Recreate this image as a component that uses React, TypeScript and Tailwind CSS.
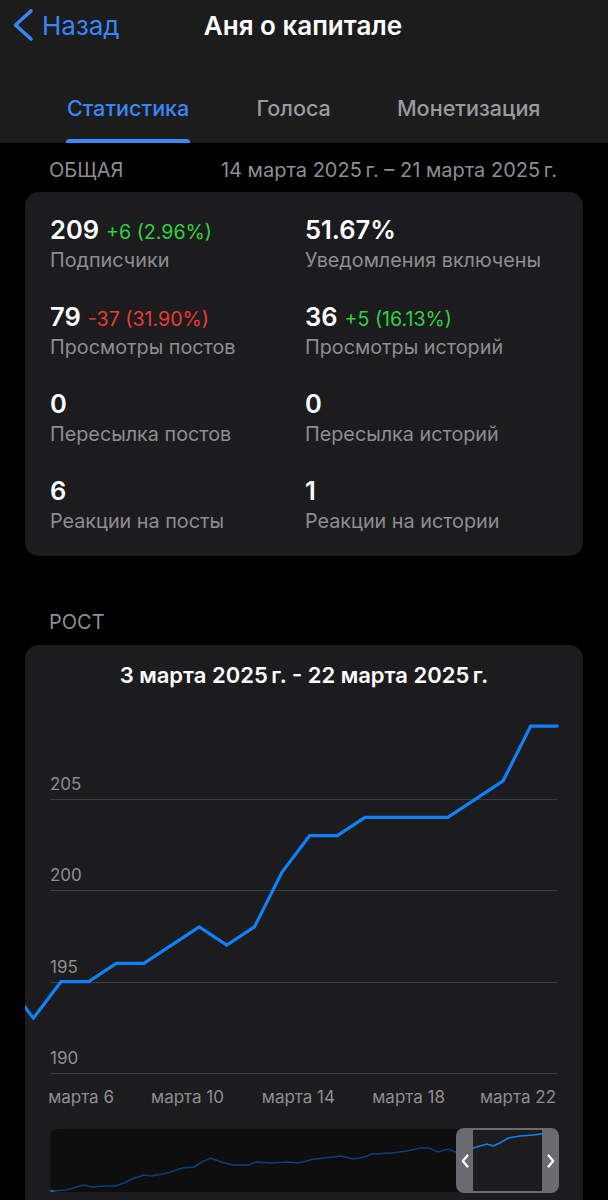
import React from "react";

const FONT = { fontFamily: "Inter, 'Noto Sans', sans-serif" };

const values = [193, 195, 195, 196, 196, 197, 198, 197, 198, 201, 203, 203, 204, 204, 204, 204, 205, 206, 209, 209];

function yOf(v: number) {
  return 386 - (v - 190) * 18.26;
}

const mainPoints: [number, number][] = [
  [-19.2, yOf(195)],
  ...values.map((v, i) => [8.4 + i * 27.63, yOf(v)] as [number, number]),
];

const mainPath = mainPoints.map((p, i) => `${i === 0 ? "M" : "L"}${p[0].toFixed(1)} ${p[1].toFixed(1)}`).join(" ");

const miniPts: [number, number][] = [
  [0.4, 62], [16, 61], [23.7, 59], [33.4, 56], [43, 58], [54.7, 57], [66, 57], [74, 54], [82, 50], [93.5, 46],
  [101, 47], [113, 45], [120.6, 43], [132, 39], [144, 38], [151.7, 33], [161, 29], [171, 33], [182.7, 36], [198, 36],
  [206, 33], [221.5, 34], [237, 33], [248.6, 34], [264, 30], [283.5, 28], [291, 27], [303, 30], [314.5, 28], [322, 25],
  [341.7, 24], [357, 22], [370.8, 19], [378.5, 19], [388, 23], [398, 20], [405.7, 23], [423, 19], [436.7, 15], [443, 17],
  [450, 14], [458, 9], [470, 7], [483, 6], [490.7, 5], [507, 3],
];
const miniPath = miniPts.map((p, i) => `${i === 0 ? "M" : "L"}${p[0]} ${p[1]}`).join(" ");

const grid = [
  { label: "205", y: 112 },
  { label: "200", y: 203 },
  { label: "195", y: 295 },
  { label: "190", y: 386 },
];

const xLabels = [
  { t: "марта 6", x: 89 },
  { t: "марта 10", x: 199 },
  { t: "марта 14", x: 310 },
  { t: "марта 18", x: 420 },
  { t: "марта 22", x: 531 },
];

type Stat = { value: string; delta?: string; deltaColor?: string; label: string };

const stats: Stat[] = [
  { value: "209", delta: "+6 (2.96%)", deltaColor: "text-[#30d33b]", label: "Подписчики" },
  { value: "51.67%", label: "Уведомления включены" },
  { value: "79", delta: "-37 (31.90%)", deltaColor: "text-[#eb3b35]", label: "Просмотры постов" },
  { value: "36", delta: "+5 (16.13%)", deltaColor: "text-[#30d33b]", label: "Просмотры историй" },
  { value: "0", label: "Пересылка постов" },
  { value: "0", label: "Пересылка историй" },
  { value: "6", label: "Реакции на посты" },
  { value: "1", label: "Реакции на истории" },
];

export default function App() {
  return (
    <div className="w-[608px] h-[1200px] overflow-hidden bg-black text-white" style={FONT}>
      {/* Header */}
      <div className="bg-[#1c1c1d] h-[143px] flex flex-col">
        <div className="relative h-[52px] flex items-center">
          <div className="flex items-center pl-[12px] text-[#3a86f6]">
            <svg width="22" height="34" viewBox="0 0 22 34" className="mt-[-2px]">
              <polyline points="19,3 3.5,17 19,31" fill="none" stroke="#3a86f6" strokeWidth="3.6" strokeLinecap="round" strokeLinejoin="round" />
            </svg>
            <span className="ml-[8px] text-[26px] leading-[30px] mt-[-1px]">Назад</span>
          </div>
          <div className="absolute left-0 right-0 top-0 h-[52px] flex items-center justify-center pointer-events-none">
            <span className="text-[26px] leading-[30px] font-semibold ml-[-2px] mt-[-1px]">Аня о капитале</span>
          </div>
        </div>
        <div className="flex-1 flex items-end pl-[66px] gap-[66px]">
          <div className="flex flex-col items-stretch">
            <span className="text-[21.6px] leading-[26px] font-medium text-[#3a86f6] px-[1px]">Статистика</span>
            <div className="mt-[18px] h-[4px] rounded-t-[3px] bg-[#3a86f6]" />
          </div>
          <div className="flex flex-col">
            <span className="text-[21.6px] leading-[26px] font-medium text-[#9a9a9f]">Голоса</span>
            <div className="mt-[18px] h-[4px]" />
          </div>
          <div className="flex flex-col">
            <span className="text-[21.6px] leading-[26px] font-medium text-[#9a9a9f]">Монетизация</span>
            <div className="mt-[18px] h-[4px]" />
          </div>
        </div>
      </div>

      {/* ОБЩАЯ */}
      <div className="flex items-center justify-between pl-[49px] pr-[51px] h-[49px] pt-[4px] text-[20px] text-[#8e8e93]">
        <span>ОБЩАЯ</span>
        <span>14 марта 2025&#8239;г. – 21 марта 2025&#8239;г.</span>
      </div>

      <div className="mx-[25px] rounded-[14px] bg-[#1c1c1e] pt-[23px] pb-[20px] pl-[25px] grid grid-cols-[255px_1fr] gap-y-[27px]">
        {stats.map((s, i) => (
          <div key={i} className="flex flex-col">
            <div className="flex items-baseline h-[30px]">
              <span className="text-[25.5px] leading-[30px] font-semibold text-white">{s.value}</span>
              {s.delta && <span className={`ml-[7px] text-[19.6px] leading-[30px] ${s.deltaColor}`}>{s.delta}</span>}
            </div>
            <span className="text-[19.8px] leading-[30px] text-[#8e8e93]">{s.label}</span>
          </div>
        ))}
      </div>

      {/* РОСТ */}
      <div className="pl-[49px] pt-[54px] h-[89px] text-[20px] leading-[24px] text-[#8e8e93]">РОСТ</div>

      <div className="mx-[25px] rounded-[14px] bg-[#1c1c1e] pt-[18px] pb-[40px] overflow-hidden">
        <div className="text-center text-[22px] leading-[24px] font-semibold">3 марта 2025&#8239;г. - 22 марта 2025&#8239;г.</div>
        <svg width="558" height="430" className="block">
          {grid.map((g) => (
            <g key={g.label}>
              <line x1="25" x2="532" y1={g.y + 0.5} y2={g.y + 0.5} stroke="#3d3d40" strokeWidth="1" />
              <text x="25" y={g.y - 9} fill="#8e8e93" fontSize="17" style={FONT}>{g.label}</text>
            </g>
          ))}
          <path d={mainPath} fill="none" stroke="#0f82fb" strokeWidth="3.2" strokeLinejoin="miter" />
          {xLabels.map((l) => (
            <text key={l.t} x={l.x} y="416" textAnchor="end" fill="#8e8e93" fontSize="17" style={FONT}>{l.t}</text>
          ))}
        </svg>
        <div className="mt-[12px] mx-[25px] relative h-[63px]">
          <svg width="508" height="63" className="block absolute inset-0">
            <path d={miniPath} fill="none" stroke="#0f82fb" strokeWidth="1.6" />
          </svg>
          <div className="absolute left-0 top-0 bottom-0 w-[410px] bg-black/50 rounded-l-[8px]" />
          <div className="absolute left-[406px] right-[-1px] top-[-1px] bottom-[-1px] flex">
            <div className="w-[17px] bg-[#6b6b70] rounded-l-[8px] flex items-center justify-center">
              <svg width="8" height="14" viewBox="0 0 8 14">
                <polyline points="6.5,1.5 1.8,7 6.5,12.5" fill="none" stroke="white" strokeWidth="2.2" strokeLinecap="round" strokeLinejoin="round" />
              </svg>
            </div>
            <div className="flex-1 border-y-[2px] border-[#6b6b70]" />
            <div className="w-[17px] bg-[#6b6b70] rounded-r-[8px] flex items-center justify-center">
              <svg width="8" height="14" viewBox="0 0 8 14">
                <polyline points="1.5,1.5 6.2,7 1.5,12.5" fill="none" stroke="white" strokeWidth="2.2" strokeLinecap="round" strokeLinejoin="round" />
              </svg>
            </div>
          </div>
        </div>
      </div>
    </div>
  );
}
